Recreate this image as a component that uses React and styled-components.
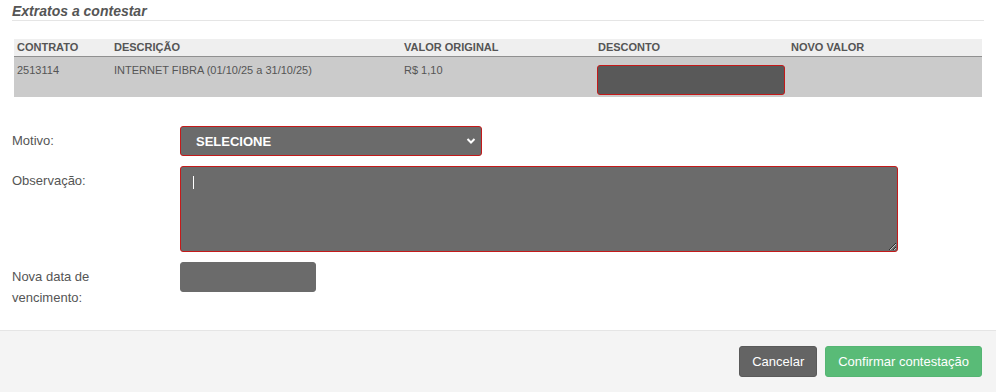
import React from 'react';
import styled, { createGlobalStyle } from 'styled-components';

const GlobalStyle = createGlobalStyle`
  body {
    margin: 0;
    background: #fff;
    font-family: "Liberation Sans", Arial, sans-serif;
    color: #555;
  }
`;

const Page = styled.div`
  width: 996px;
  height: 392px;
  display: flex;
  flex-direction: column;
  overflow: hidden;
`;

const Body = styled.div`
  padding: 0 12px;
  flex: 1;
`;

const Title = styled.h4`
  margin: 0;
  padding: 3px 0 1px;
  font-size: 14px;
  font-weight: bold;
  font-style: italic;
  line-height: 16px;
  color: #555;
  border-bottom: 1px solid #e5e5e5;
`;

const Table = styled.div`
  margin: 18px 2px 0;
  width: 968px;
`;

const Row = styled.div`
  display: grid;
  grid-template-columns: 97px 290px 194px 193px 1fr;
  background: ${(p) => (p.head ? '#efefef' : '#cbcbcb')};
  border-bottom: ${(p) => (p.head ? '1px solid #909090' : 'none')};
  height: ${(p) => (p.head ? '17px' : '40px')};
`;

const Cell = styled.div`
  padding: ${(p) => (p.head ? '0 3px' : '7px 3px 0')};
  font-size: 11px;
  font-weight: ${(p) => (p.head ? 'bold' : 'normal')};
  line-height: ${(p) => (p.head ? '17px' : '13px')};
  color: #555;
  white-space: nowrap;
`;

const InputCell = styled.div`
  padding: 8px 0 0 2px;
`;

const DiscountInput = styled.input`
  box-sizing: border-box;
  width: 188px;
  height: 30px;
  background: #595959;
  border: 1px solid #c41a1a;
  border-radius: 3px;
  outline: none;
`;

const Form = styled.div`
  margin-top: 29px;
  display: flex;
  flex-direction: column;
  gap: 10px;
`;

const FormRow = styled.div`
  display: flex;
  align-items: flex-start;
`;

const Label = styled.label`
  width: 168px;
  padding-top: 4px;
  font-size: 13px;
  line-height: 21px;
  color: #555;
`;

const SelectWrap = styled.div`
  position: relative;
  width: 302px;
  height: 30px;
`;

const Select = styled.select`
  appearance: none;
  box-sizing: border-box;
  width: 100%;
  height: 30px;
  padding: 0 0 0 15px;
  background: #6b6b6b;
  border: 1px solid #c41a1a;
  border-radius: 3px;
  color: #fff;
  font-family: "Liberation Sans", Arial, sans-serif;
  font-size: 13px;
  font-weight: bold;
  outline: none;
`;

const Chevron = styled.svg`
  position: absolute;
  right: 6px;
  top: 11px;
  pointer-events: none;
`;

const AreaWrap = styled.div`
  position: relative;
  height: 86px;
`;

const TextArea = styled.textarea`
  box-sizing: border-box;
  width: 718px;
  height: 86px;
  padding: 9px 12px;
  background: #6b6b6b;
  border: 1px solid #c41a1a;
  border-radius: 3px;
  color: #fff;
  caret-color: #fff;
  font-family: "Liberation Sans", Arial, sans-serif;
  font-size: 13px;
  outline: none;
  display: block;
`;

const Caret = styled.span`
  position: absolute;
  left: 13px;
  top: 10px;
  width: 1px;
  height: 13px;
  background: #fff;
  pointer-events: none;
`;

const DateInput = styled.input`
  box-sizing: border-box;
  width: 136px;
  height: 30px;
  background: #6b6b6b;
  border: 1px solid #6b6b6b;
  border-radius: 3px;
  outline: none;
`;

const Footer = styled.div`
  height: 62px;
  border-top: 1px solid #e5e5e5;
  background: #f4f4f4;
  display: flex;
  justify-content: flex-end;
  align-items: flex-start;
  gap: 8px;
  padding: 15px 14px 0;
  box-sizing: border-box;
`;

const Button = styled.button`
  height: 31px;
  padding: 0 12px;
  background: ${(p) => (p.primary ? '#59bb77' : '#646464')};
  border: 1px solid ${(p) => (p.primary ? '#55b573' : '#5a5a5a')};
  border-radius: 3px;
  color: #fff;
  font-family: "Liberation Sans", Arial, sans-serif;
  font-size: 13px;
`;

const headers = ['CONTRATO', 'DESCRIÇÃO', 'VALOR ORIGINAL', 'DESCONTO', 'NOVO VALOR'];

const App = () => {
  return (
    <Page>
      <GlobalStyle />
      <Body>
        <Title>Extratos a contestar</Title>
        <Table>
          <Row head>
            {headers.map((h) => (
              <Cell head key={h}>{h}</Cell>
            ))}
          </Row>
          <Row>
            <Cell>2513114</Cell>
            <Cell>INTERNET FIBRA (01/10/25 a 31/10/25)</Cell>
            <Cell>R$ 1,10</Cell>
            <InputCell>
              <DiscountInput />
            </InputCell>
            <Cell />
          </Row>
        </Table>
        <Form>
          <FormRow>
            <Label>Motivo:</Label>
            <SelectWrap>
              <Select defaultValue="">
                <option value="">SELECIONE</option>
              </Select>
              <Chevron width="10" height="8" viewBox="0 0 10 8">
                <path d="M1.5 2 L5 5.5 L8.5 2" fill="none" stroke="#fff" strokeWidth="2" />
              </Chevron>
            </SelectWrap>
          </FormRow>
          <FormRow>
            <Label>Observação:</Label>
            <AreaWrap>
              <TextArea />
              <Caret />
            </AreaWrap>
          </FormRow>
          <FormRow>
            <Label>
              Nova data de
              <br />
              vencimento:
            </Label>
            <DateInput />
          </FormRow>
        </Form>
      </Body>
      <Footer>
        <Button>Cancelar</Button>
        <Button primary>Confirmar contestação</Button>
      </Footer>
    </Page>
  );
};

export default App;
